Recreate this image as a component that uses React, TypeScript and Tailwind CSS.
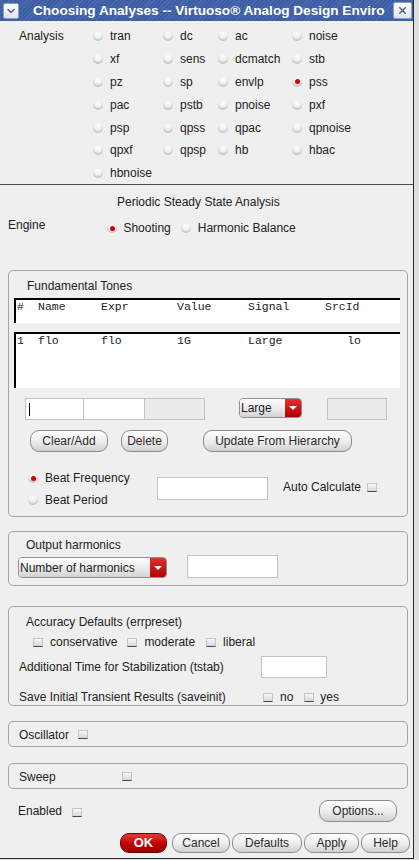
import React from 'react';
import { ChevronDown, X } from 'lucide-react';

const rows: [string, boolean][][] = [
  [['tran', false], ['dc', false], ['ac', false], ['noise', false]],
  [['xf', false], ['sens', false], ['dcmatch', false], ['stb', false]],
  [['pz', false], ['sp', false], ['envlp', false], ['pss', true]],
  [['pac', false], ['pstb', false], ['pnoise', false], ['pxf', false]],
  [['psp', false], ['qpss', false], ['qpac', false], ['qpnoise', false]],
  [['qpxf', false], ['qpsp', false], ['hb', false], ['hbac', false]],
  [['hbnoise', false]],
];

function Radio({ on }: { on?: boolean }) {
  return (
    <span className="flex h-[10px] w-[10px] shrink-0 items-center justify-center rounded-full bg-[radial-gradient(circle_at_50%_30%,#ffffff_0%,#eeeeee_45%,#9c9c9c_100%)]">
      {on && <span className="h-[5px] w-[5px] rounded-full bg-[#cc0000]" />}
    </span>
  );
}

function Check() {
  return (
    <span className="inline-block h-[9px] w-[10px] shrink-0 border border-[#c4c4c4] border-b-[#4a4a4a] bg-[linear-gradient(#f8f8f8,#d6d6d6)]" />
  );
}

function Btn({ children, className = '' }: { children: React.ReactNode; className?: string }) {
  return (
    <div
      className={`flex h-[22px] items-center justify-center rounded-[9px] border border-[#8c8c8c] bg-[linear-gradient(#fefefe,#ececec_55%,#d0d0d0)] text-[12px] text-[#2a2a2a] ${className}`}
    >
      {children}
    </div>
  );
}

function Combo({ label, className = '' }: { label: string; className?: string }) {
  return (
    <div className={`flex overflow-hidden rounded-[4px] border border-[#8f8f8f] ${className}`}>
      <div className="flex flex-1 items-center bg-[linear-gradient(#fefefe,#e8e8e8_60%,#d2d2d2)] pl-[1px] text-[12px] text-[#222]">
        {label}
      </div>
      <div className="flex w-[16px] items-center justify-center bg-[linear-gradient(#e23030,#b00000)]">
        <span className="h-0 w-0 border-x-[4px] border-t-[4px] border-x-transparent border-t-white" />
      </div>
    </div>
  );
}

function Field({ className = '', disabled }: { className?: string; disabled?: boolean }) {
  return (
    <div
      className={`border border-[#c3c3c3] ${disabled ? 'bg-[#ebebeb]' : 'bg-white'} ${className}`}
    />
  );
}

function Group({ children, className = '' }: { children: React.ReactNode; className?: string }) {
  return (
    <div className={`ml-[8px] w-[400px] rounded-[5px] border border-[#a4a4a4] ${className}`}>{children}</div>
  );
}

export default function App() {
  return (
    <div className="flex h-[860px] w-[419px] bg-[#dedede] font-['Liberation_Sans',Arial,sans-serif] text-[12px] leading-4 text-[#222]">
      <div className="flex h-[859px] w-[414px] flex-col border-r border-b border-[#2a2a2a] bg-[#efefef]">
        {/* title bar */}
        <div className="flex h-[21px] shrink-0 items-center bg-[repeating-linear-gradient(-45deg,#3e5ea4_0px,#3e5ea4_2px,#4b6bb0_2px,#4b6bb0_3px)]">
          <div className="ml-[3px] flex h-[16px] w-[16px] items-center justify-center rounded-[2px] border border-[#8e9cc0] bg-[linear-gradient(#ffffff,#dde3ef)]">
            <ChevronDown size={12} strokeWidth={3} className="text-[#51608a]" />
          </div>
          <span className="ml-[14px] whitespace-nowrap text-[13.6px] font-bold text-white">
            Choosing Analyses -- Virtuoso® Analog Design Enviro
          </span>
          <div className="ml-auto mr-[1px] flex h-[17px] w-[19px] items-center justify-center rounded-[2px] border border-[#8e9cc0] bg-[linear-gradient(#ffffff,#dde3ef)]">
            <X size={11} strokeWidth={3} className="text-[#4d5878]" />
          </div>
        </div>

        {/* analysis list */}
        <div className="h-[163px] shrink-0 pt-[4px]">
          {rows.map((row, i) => (
            <div key={i} className="grid h-[22.8px] grid-cols-[93px_70px_55px_74px_1fr] items-center">
              <div className="pl-[19px]">{i === 0 ? 'Analysis' : ''}</div>
              {row.map(([name, on]) => (
                <div key={name} className="flex items-center gap-[7px]">
                  <Radio on={on} />
                  <span>{name}</span>
                </div>
              ))}
            </div>
          ))}
        </div>
        <div className="h-px shrink-0 bg-[#4f4f4f]" />

        <div className="mt-[9px] h-[16px] shrink-0 pl-[117px]">Periodic Steady State Analysis</div>

        <div className="mt-[7px] flex h-[53px] shrink-0 items-start">
          <span className="pl-[8px]">Engine</span>
          <div className="ml-[62px] mt-[3px] flex items-center">
            <Radio on />
            <span className="ml-[6px]">Shooting</span>
            <span className="ml-[10px]">
              <Radio />
            </span>
            <span className="ml-[7px]">Harmonic Balance</span>
          </div>
        </div>

        {/* fundamental tones */}
        <Group className="shrink-0">
          <div className="pl-[18px] pt-[7px]">Fundamental Tones</div>
          <div className="ml-[5px] mt-[4px] h-[25px] w-[386px] border-l-2 border-t-2 border-black bg-white font-['Liberation_Mono',monospace] text-[11.5px] leading-[14px]">
            <div className="grid grid-cols-[21px_63px_76px_71px_77px_36px] pl-[1px]">
              <span>#</span>
              <span>Name</span>
              <span>Expr</span>
              <span>Value</span>
              <span>Signal</span>
              <span>SrcId</span>
            </div>
          </div>
          <div className="ml-[5px] mt-[9px] h-[56px] w-[386px] border-l-2 border-t-2 border-black bg-white font-['Liberation_Mono',monospace] text-[11.5px] leading-[14px]">
            <div className="grid grid-cols-[21px_63px_76px_71px_77px_36px] pl-[1px]">
              <span>1</span>
              <span>flo</span>
              <span>flo</span>
              <span>1G</span>
              <span>Large</span>
              <span className="text-right">lo</span>
            </div>
          </div>

          <div className="mt-[10px] flex items-start">
            <div className="ml-[16px] flex">
              <div className="flex h-[22px] w-[59px] items-center border border-[#c3c3c3] bg-white pl-[3px]">
                <span className="h-[13px] w-px bg-black" />
              </div>
              <Field className="-ml-px h-[22px] w-[62px]" />
              <Field className="-ml-px h-[22px] w-[61px]" disabled />
            </div>
            <Combo label="Large" className="ml-[34px] h-[20px] w-[63px]" />
            <Field className="ml-[25px] h-[22px] w-[60px]" disabled />
          </div>

          <div className="mt-[10px] flex">
            <Btn className="ml-[21px] w-[78px]">Clear/Add</Btn>
            <Btn className="ml-[13px] w-[47px]">Delete</Btn>
            <Btn className="ml-[35px] w-[149px]">Update From Hierarchy</Btn>
          </div>

          <div className="mt-[15px] flex items-start pb-[5px]">
            <div className="ml-[19px] w-[129px]">
              <div className="flex h-[22px] items-center">
                <Radio on />
                <span className="ml-[7px]">Beat Frequency</span>
              </div>
              <div className="flex h-[22px] items-center">
                <Radio />
                <span className="ml-[7px]">Beat Period</span>
              </div>
            </div>
            <Field className="mt-[10px] h-[23px] w-[111px]" />
            <div className="ml-[15px] mt-[12px] flex items-center">
              <span>Auto Calculate</span>
              <span className="ml-[6px] mt-[1px] flex">
                <Check />
              </span>
            </div>
          </div>
        </Group>

        {/* output harmonics */}
        <Group className="mt-[14px] shrink-0">
          <div className="pl-[17px] pt-[5px]">Output harmonics</div>
          <div className="mt-[2px] flex items-start pb-[7px]">
            <Combo label="Number of harmonics" className="ml-[9px] mt-[2px] h-[21px] w-[149px]" />
            <Field className="ml-[20px] h-[23px] w-[91px]" />
          </div>
        </Group>

        {/* accuracy */}
        <Group className="mt-[20px] shrink-0">
          <div className="pl-[17px] pt-[7px]">Accuracy Defaults (errpreset)</div>
          <div className="mt-[4px] flex h-[16px] items-center">
            <span className="ml-[24px] flex">
              <Check />
            </span>
            <span className="ml-[7px]">conservative</span>
            <span className="ml-[10px] flex">
              <Check />
            </span>
            <span className="ml-[7px]">moderate</span>
            <span className="ml-[11px] flex">
              <Check />
            </span>
            <span className="ml-[7px]">liberal</span>
          </div>
          <div className="mt-[5px] flex h-[23px] items-center">
            <span className="w-[252px] pl-[10px]">Additional Time for Stabilization (tstab)</span>
            <Field className="h-[22px] w-[66px]" />
          </div>
          <div className="mt-[11px] flex h-[16px] items-center">
            <span className="w-[254px] pl-[10px]">Save Initial Transient Results (saveinit)</span>
            <span className="flex">
              <Check />
            </span>
            <span className="ml-[7px]">no</span>
            <span className="ml-[11px] flex">
              <Check />
            </span>
            <span className="ml-[6px]">yes</span>
          </div>
        </Group>

        <Group className="mt-[15px] flex h-[26px] shrink-0 items-center">
          <span className="mt-[2px] pl-[10px]">Oscillator</span>
          <span className="ml-[9px] mt-[1px] flex">
            <Check />
          </span>
        </Group>

        <Group className="mt-[16px] flex h-[26px] shrink-0 items-center">
          <span className="mt-[2px] w-[113px] pl-[10px]">Sweep</span>
          <span className="mt-[1px] flex">
            <Check />
          </span>
        </Group>

        <div className="mt-[11px] flex h-[22px] shrink-0 items-center">
          <span className="pl-[18px]">Enabled</span>
          <span className="ml-[10px] mt-[2px] flex">
            <Check />
          </span>
          <Btn className="ml-auto mr-[16px] w-[78px]">Options...</Btn>
        </div>

        <div className="mt-[11px] flex shrink-0 justify-end gap-[2px] pr-[3px]">
          <div className="flex h-[20px] w-[47px] items-center justify-center rounded-[9px] border border-[#6a0000] bg-[linear-gradient(#e63a3a,#c00000_55%,#9a0000)] text-[13px] font-bold text-white">
            OK
          </div>
          <Btn className="ml-[3px] !h-[20px] w-[58px]">Cancel</Btn>
          <Btn className="!h-[20px] w-[70px]">Defaults</Btn>
          <Btn className="!h-[20px] w-[55px]">Apply</Btn>
          <Btn className="!h-[20px] w-[49px]">Help</Btn>
        </div>
      </div>
      <div className="flex-1" />
    </div>
  );
}
